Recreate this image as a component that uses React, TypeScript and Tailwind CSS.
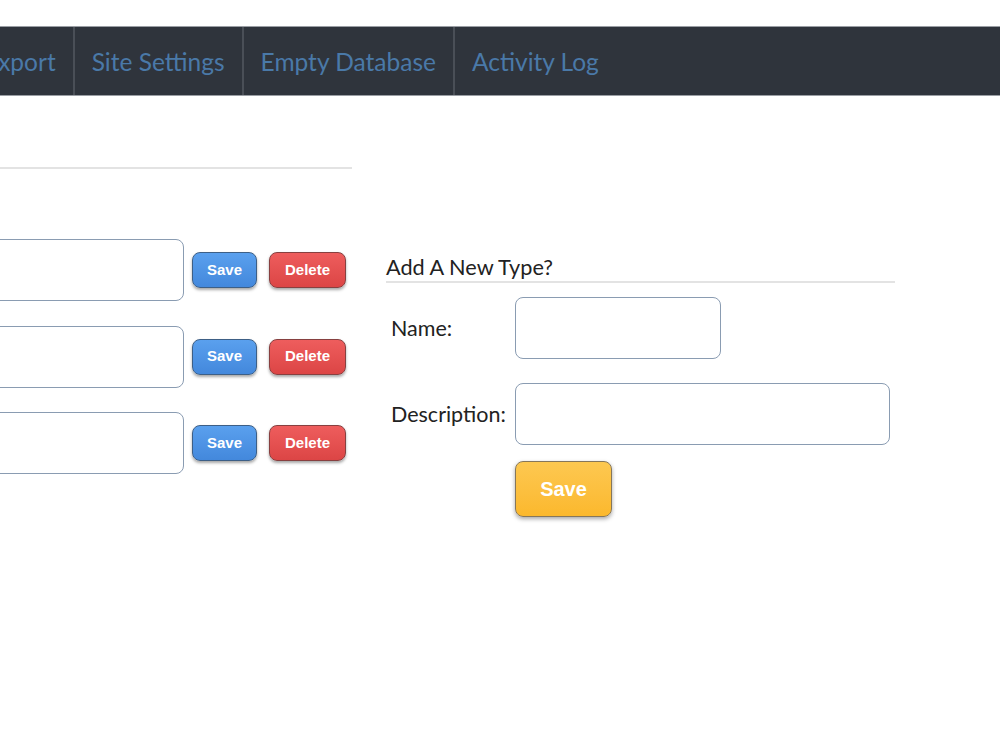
import React from "react";

const font = { fontFamily: "Lato, 'Open Sans', sans-serif" };

function SmallBtn({ label, kind }: { label: string; kind: "save" | "delete" }) {
  const cls =
    kind === "save"
      ? "w-[65px] bg-gradient-to-b from-[#5aa0ee] to-[#4388dc] border-[#3d5f86]"
      : "w-[77px] bg-gradient-to-b from-[#ee5d5d] to-[#dc4545] border-[#874040]";
  return (
    <button
      className={`h-[36px] rounded-[8px] border-[1.5px] ${cls} text-white font-bold text-[15px] shadow-[0_2px_3px_rgba(0,0,0,0.35)]`}
      style={{ fontFamily: "'Liberation Sans', Arial, sans-serif" }}
    >
      {label}
    </button>
  );
}

function Row() {
  return (
    <div className="flex items-center h-[62px]">
      <div className="w-[384px] h-[62px] rounded-[8px] border-[1.5px] border-[#8a9cb2] bg-white" />
      <div className="ml-[8px]">
        <SmallBtn label="Save" kind="save" />
      </div>
      <div className="ml-[12px]">
        <SmallBtn label="Delete" kind="delete" />
      </div>
    </div>
  );
}

export default function App() {
  const items = ["Export", "Site Settings", "Empty Database", "Activity Log"];
  return (
    <div className="w-[1000px] h-[750px] bg-white overflow-hidden" style={font}>
      <div className="h-[26px]" />
      <nav className="h-[70px] bg-[#2f343c] border-y border-[#9a9ea4] flex overflow-hidden">
        <div className="flex -ml-[33px]">
          {items.map((it, i) => (
            <div
              key={it}
              className={`flex items-center px-[17px] pt-[2px] text-[24.5px] text-[#4a79a8] ${
                i < items.length - 1 ? "border-r-[2px] border-[#4a4f57]" : ""
              }`}
            >
              {it}
            </div>
          ))}
        </div>
      </nav>
      <div className="flex -ml-[200px]">
        <div className="w-[552px] shrink-0">
          <div className="mt-[71px] h-[2px] bg-[#e3e3e3]" />
          <div className="mt-[70px] flex flex-col gap-[24.5px]">
            <Row />
            <Row />
            <Row />
          </div>
        </div>
        <div className="ml-[34px] w-[509px] pt-[158px]">
          <div className="text-[21.7px] leading-[27px] text-[#222]">Add A New Type?</div>
          <div className="h-[2px] bg-[#e3e3e3]" />
          <div className="mt-[14px] flex items-center">
            <div className="w-[129px] pl-[5px] text-[21.5px] text-[#222]">Name:</div>
            <div className="w-[206px] h-[62px] rounded-[8px] border-[1.5px] border-[#8a9cb2]" />
          </div>
          <div className="mt-[24px] flex items-center">
            <div className="w-[129px] pl-[5px] text-[21.5px] text-[#222] whitespace-nowrap">Description:</div>
            <div className="w-[375px] h-[62px] rounded-[8px] border-[1.5px] border-[#8a9cb2]" />
          </div>
          <div className="mt-[16px] ml-[129px]">
            <button
              className="w-[97px] h-[56px] rounded-[8px] border-[1.5px] border-[#86775a] bg-gradient-to-b from-[#fdc850] to-[#fbb82c] text-white font-bold text-[20px] shadow-[0_2px_4px_rgba(0,0,0,0.35)]"
              style={{ fontFamily: "'Liberation Sans', Arial, sans-serif" }}
            >
              Save
            </button>
          </div>
        </div>
      </div>
    </div>
  );
}
